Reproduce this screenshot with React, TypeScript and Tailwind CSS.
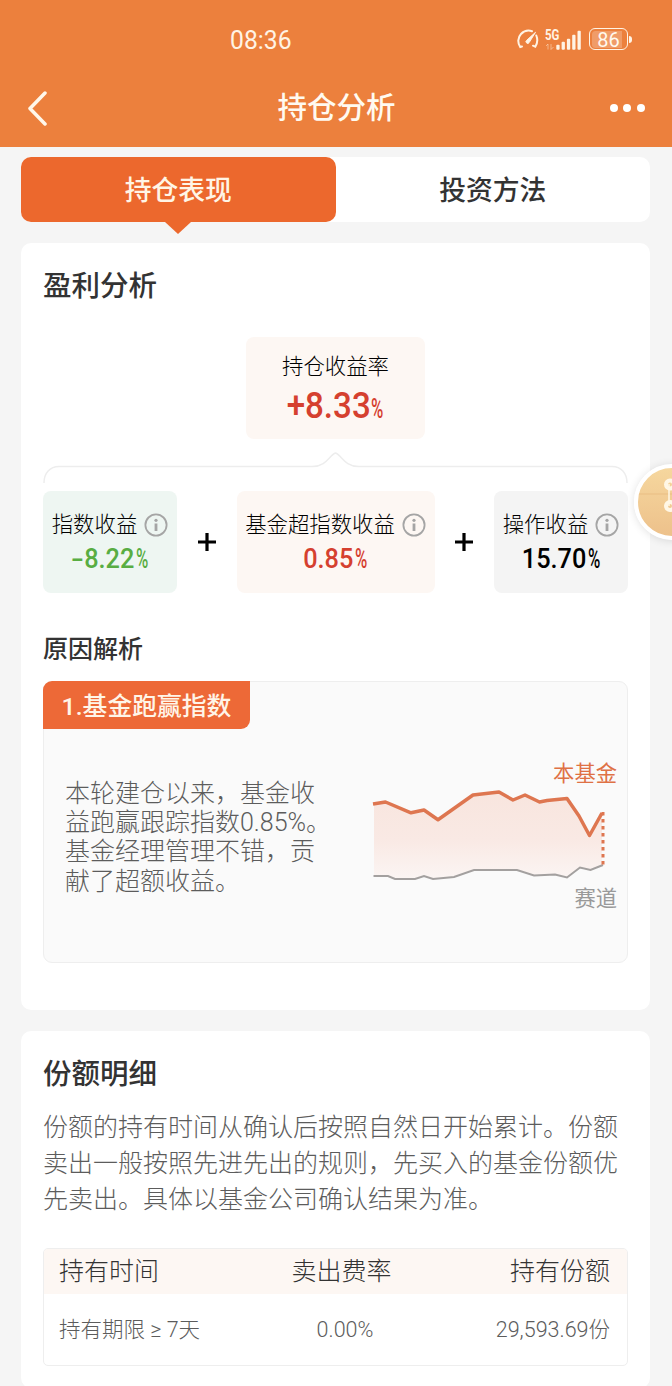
import { ReactNode } from 'react';
import clsx from 'clsx';

const factors = [
  { name: '指数收益', value: '-8.22', box: 'w-[134px] bg-[#eef6f2]', color: 'text-[#58ad43]' },
  { name: '基金超指数收益', value: '0.85', box: 'w-[198px] bg-[#fdf7f3]', color: 'text-[#d5402f]' },
  { name: '操作收益', value: '15.70', box: 'w-[134px] bg-[#f4f4f4]', color: 'text-black' },
];

const reasonLines = ['本轮建仓以来，基金收', '益跑赢跟踪指数0.85%。', '基金经理管理不错，贡', '献了超额收益。'];

const detailLines = [
  '份额的持有时间从确认后按照自然日开始累计。份额',
  '卖出一般按照先进先出的规则，先买入的基金份额优',
  '先卖出。具体以基金公司确认结果为准。',
];

const signalBars = [
  { x: 0, h: 5 },
  { x: 5.3, h: 8 },
  { x: 10.6, h: 11 },
  { x: 15.9, h: 15 },
  { x: 21.2, h: 19 },
];

function StatusBar() {
  return (
    <div className="flex h-[78px] items-center text-[#fff3e4]">
      <span className="ml-[230px] w-[62px] pt-[2px] text-[26px] leading-none">
        <span className="inline-block origin-left scale-x-[0.95]">08:36</span>
      </span>
      <svg className="ml-[225px]" width="22" height="20" viewBox="0 0 22 20" fill="none" stroke="currentColor">
        <path d="M5 17.5 3.2 18C.5 14 .6 8.600 4 5 7.200 1.700 11 .9 15 2.200" strokeWidth="2" strokeLinecap="round" />
        <path d="M19.300 6.500c1.600 4 1.200 7.800-1 11.200l-2.300-1" strokeWidth="2" strokeLinecap="round" />
        <path d="m18.500 3.300-6.300 10.200a1.700 1.700 0 1 1-2.500-2.200z" fill="currentColor" strokeWidth="1" />
      </svg>
      <div className="relative ml-[6px] h-[21px] w-[37px]">
        <span className="absolute -top-[1px] left-0 origin-left scale-x-[0.82] text-[14px] leading-[14px] font-bold">
          5G
        </span>
        <svg className="absolute bottom-0 left-0" width="37" height="21" viewBox="0 0 37 21" fill="currentColor">
          <path d="M3 20.500v-5.500M1 17l2-2M6 15v5.500l2.500-2.500" fill="none" stroke="currentColor" opacity=".45" />
          {signalBars.map((bar) => (
            <rect key={bar.x} x={bar.x + 11.3} y={20.7 - bar.h} width="3.300" height={bar.h} rx="1" />
          ))}
        </svg>
      </div>
      <div className="ml-[7px] flex h-[22px] w-[39px] items-center justify-center rounded-[6px] border-[1.5px] border-current bg-[linear-gradient(90deg,#f09c68_0_86%,transparent_86%)] bg-clip-content p-[1.5px]">
        <span className="relative top-px text-[20px] leading-none text-[#fff9ee]">86</span>
      </div>
      <div className="ml-[1px] h-[7px] w-[3px] rounded-r-sm bg-current" />
    </div>
  );
}

function Percent({ value, large }: { value: string; large?: boolean }) {
  const negative = value.startsWith('-');

  return (
    <span className="flex items-baseline justify-center">
      {negative && (
        <span className="w-[13px] text-[27px] leading-7 font-medium">
          <span className="inline-block origin-left scale-x-[1.4]">-</span>
        </span>
      )}
      <span
        className={clsx(
          'font-medium',
          large ? '-mx-[4px] scale-x-[0.92] text-[36px] leading-9' : '-mx-[2px] scale-x-[0.92] text-[27.500px] leading-7'
        )}
      >
        {negative ? value.slice(1) : value}
      </span>
      <span className={clsx('w-[13px]', !large && 'ml-[1px]')}>
        <span className="inline-block origin-left scale-x-[0.62] text-[27px] leading-7 font-medium">%</span>
      </span>
    </span>
  );
}

function InfoIcon() {
  return (
    <svg className="ml-[7px] shrink-0" width="24" height="24" viewBox="0 0 24 24" fill="none" stroke="#a5a5a5">
      <circle cx="12" cy="12" r="10.600" strokeWidth="1.800" />
      <circle cx="12" cy="7.300" r="1.600" fill="#a5a5a5" stroke="none" />
      <path d="M12 10.500v7.500" strokeWidth="2.800" />
    </svg>
  );
}

function Plus() {
  return (
    <svg className="-mt-[1px]" width="18" height="18" viewBox="0 0 18 18" stroke="#000" strokeWidth="3.200">
      <path d="M9 0v18M0 9h18" />
    </svg>
  );
}

function Card({ className, children }: { className?: string; children: ReactNode }) {
  return <section className={clsx('rounded-[10px] bg-white px-[22px]', className)}>{children}</section>;
}

function TrendChart() {
  return (
    <svg width="240" height="104" viewBox="0 0 240 104" fill="none">
      <defs>
        <linearGradient id="trend-fill" x1="0" y1="0" x2="0" y2="1">
          <stop offset="0" stopColor="#f8e5de" />
          <stop offset=".55" stopColor="#f9e9e4" />
          <stop offset="1" stopColor="#fbf5f3" />
        </linearGradient>
      </defs>
      <path
        d="M4 18 16 16 41 26.500 54 24 68 33.500 103 9 129 6 143 14 155 9 169.500 16 177 14.500 197 12.500 209 30 220 49.500 232 26V79L220 84 210 81 197 91 185 88.500 164 89.500 147 84H104L84 91 63 93 54 90 45 93H25L17 90H4Z"
        fill="url(#trend-fill)"
      />
      <path
        d="M3.500 90H18L25 93H45L54 90 63 93 84 91 104 84H147L164 89.500 185 88.500 197 91.500 210 81.500 220.500 84 233 79"
        stroke="#a3a09f"
        strokeWidth="2"
      />
      <path
        d="M3 18 15.500 16 41 26.800 54 24 68 33.800 103 9 129 6 143 14 155 9 169.500 16 177 14.500 197 12.500 209 30 219.500 49.500 232 27"
        stroke="#de7650"
        strokeWidth="3.500"
        strokeLinejoin="round"
      />
      <path d="M233 26V80" stroke="#de7650" strokeWidth="3" strokeDasharray="3.500 3.500" />
    </svg>
  );
}

export default function App() {
  return (
    <div className="relative h-[1386px] w-[672px] overflow-hidden bg-[#f5f5f5] font-[Roboto,'Noto_Sans_CJK_SC',sans-serif] whitespace-nowrap text-[#333]">
      <header className="h-[147px] bg-[#ec803d] text-white">
        <StatusBar />
        <div className="flex h-[60px] items-center justify-between pr-[27px] pl-[27px]">
          <svg width="36" height="36" viewBox="0 0 36 36" fill="none" stroke="#fff7ea" strokeWidth="3.500">
            <path d="M18 3 3 18.500 18 34" strokeLinecap="round" strokeLinejoin="round" />
          </svg>
          <h1 className="pt-[2px] text-[29.500px] leading-none font-medium text-[#fffaf0]">持仓分析</h1>
          <div className="flex gap-[5.500px]">
            <span className="size-[8px] rounded-full bg-white" />
            <span className="size-[8px] rounded-full bg-white" />
            <span className="size-[8px] rounded-full bg-white" />
          </div>
        </div>
      </header>

      <main className="pt-[10px] pr-[22px] pl-[21px]">
        <div className="grid h-[65px] grid-cols-2 rounded-[10px] bg-white text-[26.800px] font-medium">
          <button className="relative rounded-[10px] bg-[#ec682d] pt-[4px] text-[#fff5e6]">
            持仓表现
            <svg className="absolute top-full left-1/2 -ml-[13px]" width="26" height="12" viewBox="0 0 26 12">
              <path d="M0 0h26L13 12z" fill="#ec682d" />
            </svg>
          </button>
          <button className="pt-[4px]">投资方法</button>
        </div>

        <Card className="mt-[21px] h-[767px] pt-[26px]">
          <h2 className="text-[28.500px] leading-[36px] font-medium">盈利分析</h2>

          <div className="mx-auto mt-[32px] h-[102px] w-[179px] rounded-[8px] bg-[#fdf7f3] pt-[15px] text-center">
            <div className="text-[21.400px] leading-[30px] font-light text-black">持仓收益率</div>
            <div className="mt-[6px] text-[#d5402f]">
              <Percent value="+8.33" large />
            </div>
          </div>

          <svg className="mt-[12px]" width="585" height="36" viewBox="0 0 586 36" fill="none" stroke="#ededed" strokeWidth="1.500">
            <path d="M1 32C1 22 7 15.500 16 15.500H270C284 15.500 287 4 293 2 299 4 302 15.500 316 15.500H570C579 15.500 585 22 585 32" />
          </svg>

          <div className="mt-[4px] flex items-center justify-between">
            {factors.map((item, i) => (
              <div key={item.name} className="contents">
                {i > 0 && <Plus />}
                <div className={clsx('h-[102px] rounded-[8px] pt-[19px]', item.box)}>
                  <div className="flex items-center justify-center text-[21.400px] leading-[30px] font-light text-black">
                    {item.name}
                    <InfoIcon />
                  </div>
                  <div className={clsx('mt-[5px]', item.color)}>
                    <Percent value={item.value} />
                  </div>
                </div>
              </div>
            ))}
          </div>

          <h3 className="mt-[39px] text-[25px] leading-[36px] font-medium">原因解析</h3>

          <div className="mt-[13px] h-[282px] rounded-[9px] border border-[#eeeeee] bg-[#fafafa]">
            <div className="-mt-px -ml-px flex h-[48px] w-[207px] items-center justify-center rounded-tl-[9px] rounded-br-[9px] bg-[#ed6937] pt-[3px] text-[24.800px] font-medium text-[#fff5e8]">
              1.基金跑赢指数
            </div>
            <div className="flex justify-between pr-[10px] pl-[21px]">
              <div className="pt-[50px] text-[25px] leading-[29.200px] font-light text-[#5c5c5c]">
                {reasonLines.map((line) => (
                  <div key={line}>{line}</div>
                ))}
              </div>
              <div className="flex flex-col items-end pt-[31px] text-[21.300px] leading-[28px]">
                <span className="text-[#df7145]">本基金</span>
                <div className="-mt-[2px] mr-[7px]">
                  <TrendChart />
                </div>
                <span className="-mt-[5px] text-[#999]">赛道</span>
              </div>
            </div>
          </div>
        </Card>

        <Card className="mt-[21px] h-[357px] pt-[26px]">
          <h2 className="text-[28.500px] leading-[36px] font-medium">份额明细</h2>
          <div className="mt-[17px] text-[25px] leading-[36px] font-light text-[#5c5c5c]">
            {detailLines.map((line) => (
              <div key={line}>{line}</div>
            ))}
          </div>

          <div className="mt-[30px] h-[118px] overflow-hidden rounded-[5px] border border-[#eeeeee] font-light">
            <div className="grid h-[45px] grid-cols-[200px_1fr_200px] items-center bg-[#fdf7f3] pt-px pr-[17px] pl-[15px] text-[25px]">
              <span>持有时间</span>
              <span className="pl-[14px] text-center">卖出费率</span>
              <span className="text-right">持有份额</span>
            </div>
            <div className="grid h-[71px] grid-cols-[200px_1fr_200px] items-center pt-[2px] pr-[17px] pl-[15px] text-[21.500px] text-[#5c5c5c]">
              <span>持有期限 ≥ 7天</span>
              <span className="pl-[21px] text-center">0.00%</span>
              <span className="text-right">29,593.69份</span>
            </div>
          </div>
        </Card>
      </main>

      {/* floating shortcut, half off the right edge */}
      <div className="absolute top-[464px] left-[634px] size-[76px] overflow-hidden rounded-full border-[4px] border-white bg-linear-to-b from-[#f6d79e] to-[#edc18b] shadow-[0_1px_8px_rgba(0,0,0,0.12)]">
        <svg width="68" height="68" viewBox="0 0 68 68" fill="none" stroke="#fff7e6">
          <path d="M0 26h68" stroke="#e9bd83" />
          <path d="M31 16v22" strokeWidth="1.500" />
          <circle cx="32" cy="16.500" r="4" strokeWidth="4" />
          <circle cx="32" cy="38" r="4" strokeWidth="4" />
        </svg>
      </div>
    </div>
  );
}
